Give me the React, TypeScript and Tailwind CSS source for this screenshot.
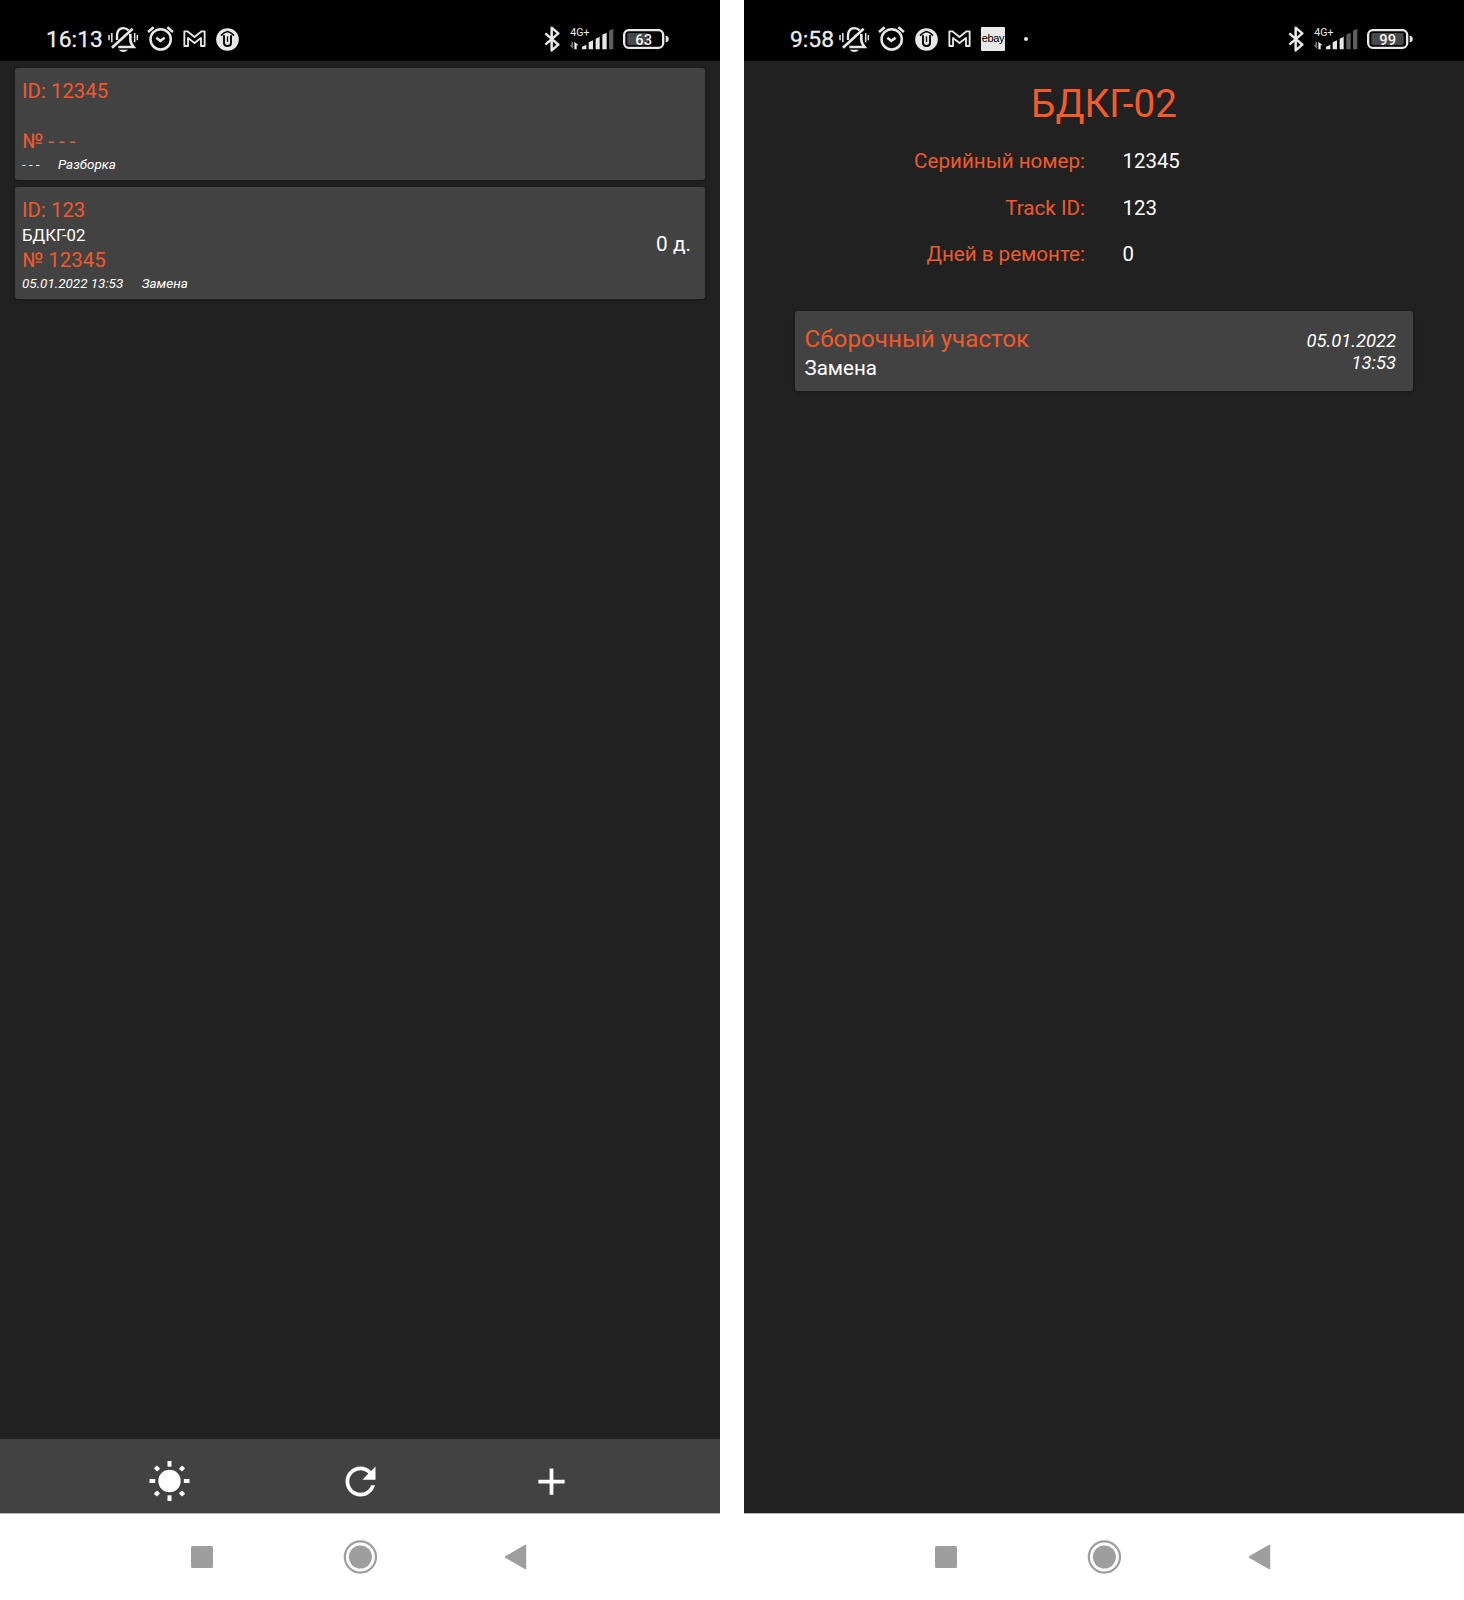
import type { ReactNode } from "react";

function BellOff() {
  return (
    <svg className="h-[26px] w-[30px] shrink-0" viewBox="0 0 90 78" fill="none" stroke="#e8e8e8" strokeWidth="7">
      <path d="M27 42V28C28 14 36 6.500 46 6.500C53 6.500 58 9 62 13" />
      <path d="M67 24V42C67 50 71 55 77 63H31" strokeWidth="8" />
      <path d="M12 65L74 8" strokeWidth="8" />
      <path d="M32 71H60Q54 78 46 78T32 71Z" fill="#e8e8e8" stroke="none" />
      <path d="M3 27V43M11.500 21V49M80 21V49M88 27V43" strokeWidth="4.500" />
    </svg>
  );
}

function Alarm() {
  return (
    <svg className="h-[25.3px] w-[27px] shrink-0" viewBox="0 0 81 76" fill="none" stroke="#e8e8e8" strokeWidth="7.500">
      <circle cx="41" cy="40" r="30.500" />
      <path d="M28 35L40 44.500L53 35" strokeWidth="7.500" />
      <path d="M3 18L20 4M61 4L78 18" />
    </svg>
  );
}

function Mail() {
  return (
    <svg className="h-[17.3px] w-[23px] shrink-0" viewBox="0 0 69 52" fill="none" stroke="#e8e8e8" strokeWidth="5.500" strokeLinejoin="round">
      <path d="M4 4H13L34.500 21L56 4H65V48H54V24L34.500 39L15 24V48H4Z" />
    </svg>
  );
}

function UpBadge() {
  return (
    <svg className="size-[23px] shrink-0" viewBox="0 0 69 69" fill="none" stroke="#0a0a0a" strokeWidth="5">
      <circle cx="34.500" cy="34.500" r="34" fill="#e8e8e8" stroke="none" />
      <path d="M15 23Q24 13 34.500 10.500Q45 13 54 23" />
      <path d="M24 22V44Q24 54 34.500 54T45 44V22" strokeWidth="6" />
      <path d="M34.500 25V42" strokeWidth="4" />
    </svg>
  );
}

function Bluetooth() {
  return (
    <svg className="h-[26px] w-[16px] shrink-0" viewBox="0 0 48 78" fill="none" stroke="#e8e8e8" strokeWidth="7.500" strokeLinejoin="round">
      <path d="M4 22L43 56L23 73V5L43 22L4 56" />
    </svg>
  );
}

const BARS = [
  "M39 70V62L52 56V70Z",
  "M59 70V49L72 43V70Z",
  "M80 70V38L92 32V70Z",
  "M100 70V26L113 20V70Z",
  "M120 70V14L133 8V70Z",
];

function Signal({ level }: { level: number }) {
  return (
    <svg className="h-[26px] w-[45px] shrink-0" viewBox="0 0 135 78">
      <text x="4" y="30" fontSize="30" fontFamily="Roboto, sans-serif" fill="#e8e8e8" textLength="58" lengthAdjust="spacingAndGlyphs">
        4G+
      </text>
      <path d="M12 47V68L1 57H7V47Z" fill="#777" />
      <path d="M16 47L29 58H23V70H16Z" fill="#e8e8e8" />
      {BARS.map((d, i) => (
        <path key={d} d={d} fill={i < level ? "#e8e8e8" : "#5c5c5c"} />
      ))}
    </svg>
  );
}

function Battery({ level }: { level: number }) {
  return (
    <svg className="h-[20px] w-[46px] shrink-0" viewBox="0 0 138 60">
      <rect x="3.500" y="3.500" width="117" height="53" rx="14" fill="none" stroke="#e8e8e8" strokeWidth="7" />
      <rect x="13" y="12" width={level * 0.98} height="36" rx="5" fill="#484848" />
      <path d="M128 20Q137 20 137 30T128 40Z" fill="#e8e8e8" />
      <text x="62" y="47" textAnchor="middle" fontSize="44" fontWeight="500" fontFamily="Roboto, sans-serif" fill="#f2f2f2">
        {level}
      </text>
    </svg>
  );
}

function StatusBar({ time, battery, signal, children }: { time: string; battery: number; signal: number; children: ReactNode }) {
  return (
    <header className="flex h-[61px] shrink-0 items-center bg-black pt-[18px] pr-[51px] pl-[46px]">
      <span className="pt-px text-[22.8px] leading-[42px] text-[#ececec] [-webkit-text-stroke:0.3px_#ececec]">{time}</span>
      <div className="flex items-center pb-px pl-[5px]">{children}</div>
      <div className="ml-auto flex items-center pb-px">
        <Bluetooth />
        <span className="w-[9px]" />
        <Signal level={signal} />
        <span className="w-[9px]" />
        <Battery level={battery} />
      </div>
    </header>
  );
}

function NavBar() {
  return (
    <nav className="flex h-[87px] shrink-0 items-center border-t border-[#b8b8b8] bg-white pl-[191px]">
      <span className="size-[22px] rounded-[1.500px] bg-[#9e9e9e]" />
      <svg className="ml-[130px] h-[34px] w-[35px]" viewBox="0 0 35 34">
        <circle cx="17.400" cy="17" r="15.600" fill="none" stroke="#9e9e9e" strokeWidth="2.200" />
        <circle cx="17.400" cy="17" r="11.500" fill="#9e9e9e" />
      </svg>
      <svg className="ml-[126px] h-[26px] w-[23px]" viewBox="0 0 23 26">
        <path d="M21.500 1.500V24.500L1.500 13Z" fill="#9e9e9e" stroke="#9e9e9e" strokeWidth="1.500" strokeLinejoin="round" />
      </svg>
    </nav>
  );
}

type Item = { id: string; name: string; serial: string; date: string; state: string; days?: string };

const ITEMS: Item[] = [
  { id: "12345", name: "", serial: "- - -", date: "- - -", state: "Разборка" },
  { id: "123", name: "БДКГ-02", serial: "12345", date: "05.01.2022 13:53", state: "Замена", days: "0 д." },
];

function ItemCard({ item }: { item: Item }) {
  return (
    <article className="flex h-[112px] items-center justify-between rounded-[3px] bg-[#424242] pt-[3px] pr-[14px] pl-[7px] shadow-[0_1px_4px_rgba(0,0,0,0.35)]">
      <div className="pt-px">
        <p className="h-[26px] text-[20.4px] leading-[26px] text-[#f0592b]">ID: {item.id}</p>
        <p className="h-[25px] text-[16.8px] leading-[24px]">{item.name}</p>
        <p className="h-[26px] text-[20.5px] leading-[25px] text-[#f0592b]">№ {item.serial}</p>
        <p className="flex h-[20px] gap-[18.5px] text-[13.45px] leading-[19px] italic">
          <span>{item.date}</span>
          <span>{item.state}</span>
        </p>
      </div>
      {item.days && <span className="pb-[2px] text-[20.8px] leading-[24px]">{item.days}</span>}
    </article>
  );
}

function ListScreen() {
  return (
    <section className="flex w-[720px] flex-col bg-[#212121]">
      <StatusBar time="16:13" battery={63} signal={4}>
        <BellOff />
        <span className="w-[9px]" />
        <Alarm />
        <span className="w-[9.5px]" />
        <Mail />
        <span className="w-[10px]" />
        <UpBadge />
      </StatusBar>
      <main className="flex flex-1 flex-col gap-[7px] px-[15px] pt-[7px]">
        {ITEMS.map((item) => (
          <ItemCard key={item.id} item={item} />
        ))}
      </main>
      <footer className="flex h-[74px] shrink-0 items-center bg-[#424242] pt-[10px] pl-[149px]">
        <svg className="size-[41px]" viewBox="-20.500 -20 41 41" fill="#fff">
          <circle r="11.200" />
          {[0, 45, 90, 135, 180, 225, 270, 315].map((a) =>
            a % 90 === 0 ? (
              <rect key={a} x="-2" y="-20" width="4" height="5.700" transform={`rotate(${a})`} />
            ) : (
              <rect key={a} x="-2.100" y="-20" width="4.200" height="4.600" rx="0.800" transform={`rotate(${a})`} />
            ),
          )}
        </svg>
        <svg className="ml-[148px] size-[45px]" viewBox="0 0 24 24" fill="#fff">
          <path d="M17.650 6.350C16.200 4.900 14.210 4 12 4c-4.420 0-7.990 3.580-7.990 8s3.570 8 7.990 8c3.730 0 6.840-2.550 7.730-6h-2.080c-.82 2.330-3.040 4-5.650 4-3.310 0-6-2.690-6-6s2.690-6 6-6c1.660 0 3.140.69 4.220 1.780L13 11h7V4l-2.350 2.350z" />
        </svg>
        <svg className="ml-[146px] size-[45px]" viewBox="0 0 24 24" fill="#fff">
          <path d="M19 13h-6v6h-2v-6H5v-2h6V5h2v6h6v2z" />
        </svg>
      </footer>
      <NavBar />
    </section>
  );
}

const FIELDS = [
  ["Серийный номер:", "12345"],
  ["Track ID:", "123"],
  ["Дней в ремонте:", "0"],
];

function DetailScreen() {
  return (
    <section className="flex w-[720px] flex-col bg-[#212121]">
      <StatusBar time="9:58" battery={99} signal={3}>
        <BellOff />
        <span className="w-[9px]" />
        <Alarm />
        <span className="w-[10px]" />
        <UpBadge />
        <span className="w-[10px]" />
        <Mail />
        <span className="w-[10px]" />
        <span className="flex size-[24px] shrink-0 items-center justify-center rounded-[1px] bg-[#e8e8e8] pb-[2px] font-['Liberation_Sans',sans-serif] text-[11px] tracking-[-0.4px] text-black">
          ebay
        </span>
        <span className="ml-[19px] size-[4px] rounded-full bg-[#e8e8e8]" />
      </StatusBar>
      <main className="flex-1 px-[51px]">
        <h1 className="mt-[19px] text-center text-[38.6px] leading-[48px] text-[#f55a2a]">БДКГ-02</h1>
        <dl className="mt-[10px]">
          {FIELDS.map(([label, value]) => (
            <div key={label} className="flex h-[46.700px] items-center">
              <dt className="w-[290px] text-right text-[20.6px] text-[#f0592b]">{label}</dt>
              <dd className="ml-[37.5px] text-[20.4px]">{value}</dd>
            </div>
          ))}
        </dl>
        <article className="mt-[33px] flex h-[80px] items-center justify-between rounded-[3px] bg-[#424242] pr-[17px] pl-[9.5px] shadow-[0_1px_4px_rgba(0,0,0,0.35)]">
          <div className="pt-[4px]">
            <p className="text-[24.2px] leading-[30px] text-[#f0592b]">Сборочный участок</p>
            <p className="text-[20.5px] leading-[29px]">Замена</p>
          </div>
          <p className="pt-px text-right text-[18.4px] leading-[21.5px] italic">
            05.01.2022
            <br />
            13:53
          </p>
        </article>
      </main>
      <NavBar />
    </section>
  );
}

export default function App() {
  return (
    <div className="flex h-[1600px] w-[1464px] justify-between bg-white font-['Roboto',sans-serif] text-white">
      <ListScreen />
      <DetailScreen />
    </div>
  );
}
